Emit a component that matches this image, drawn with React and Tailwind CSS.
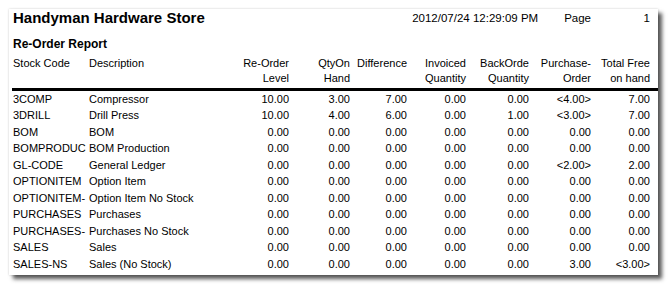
const cols = 'grid grid-cols-[76px_140px_60px_61px_57px_59px_63px_62px_59px]'

const headers = [
  ['Stock Code'],
  ['Description'],
  ['Re-Order', 'Level'],
  ['QtyOn', 'Hand'],
  ['Difference'],
  ['Invoiced', 'Quantity'],
  ['BackOrde', 'Quantity'],
  ['Purchase-', 'Order'],
  ['Total Free', 'on hand'],
]

const z = ['0.00', '0.00', '0.00', '0.00', '0.00', '0.00', '0.00']

const rows = [
  ['3COMP', 'Compressor', '10.00', '3.00', '7.00', '0.00', '0.00', '<4.00>', '7.00'],
  ['3DRILL', 'Drill Press', '10.00', '4.00', '6.00', '0.00', '1.00', '<3.00>', '7.00'],
  ['BOM', 'BOM', ...z],
  ['BOMPRODUC', 'BOM Production', ...z],
  ['GL-CODE', 'General Ledger', '0.00', '0.00', '0.00', '0.00', '0.00', '<2.00>', '2.00'],
  ['OPTIONITEM', 'Option Item', ...z],
  ['OPTIONITEM-', 'Option Item No Stock', ...z],
  ['PURCHASES', 'Purchases', ...z],
  ['PURCHASES-', 'Purchases No Stock', ...z],
  ['SALES', 'Sales', ...z],
  ['SALES-NS', 'Sales (No Stock)', '0.00', '0.00', '0.00', '0.00', '0.00', '3.00', '<3.00>'],
]

export default function App() {
  return (
    <div className="w-[669px] h-[284px] bg-white pt-[9px] pl-[9px] text-black font-['Liberation_Sans',Arial,sans-serif]">
      <div className="w-[649px] h-[266px] bg-white flex flex-col shadow-[0_0_2px_rgba(0,0,0,0.2),4px_4px_4px_rgba(0,0,0,0.65)]">
        {/* Title bar */}
        <div className="flex items-center h-[18px] pl-[4px] pr-[8px]">
          <span className="text-[15px] font-bold leading-[18px]">Handyman Hardware Store</span>
          <span className="ml-auto text-[11.5px] leading-[18px]">2012/07/24 12:29:09 PM</span>
          <span className="ml-[26px] text-[11.5px] leading-[18px]">Page</span>
          <span className="w-[59px] text-right text-[11.5px] leading-[18px]">1</span>
        </div>

        <div className="mt-[9px] pl-[4px] text-[12px] font-bold leading-[16px]">Re-Order Report</div>

        {/* Column headers */}
        <div className={`${cols} mt-[4px] pl-[4px] text-[11px] leading-[15px]`}>
          {headers.map((h, i) => (
            <div key={i} className={i < 2 ? 'text-left' : 'text-right'}>
              {h.map((l) => (
                <div key={l}>{l}</div>
              ))}
            </div>
          ))}
        </div>
        <div className="mt-[2px] ml-[3px] h-[3px] bg-black" />

        {/* Rows */}
        <div className="pl-[4px] text-[11px]">
          {rows.map((r) => (
            <div key={r[0]} className={`${cols} h-[16.5px] items-center leading-[13px]`}>
              {r.map((c, i) => (
                <div key={i} className={i < 2 ? 'text-left whitespace-nowrap' : 'text-right'}>
                  {c}
                </div>
              ))}
            </div>
          ))}
        </div>
      </div>
    </div>
  )
}
